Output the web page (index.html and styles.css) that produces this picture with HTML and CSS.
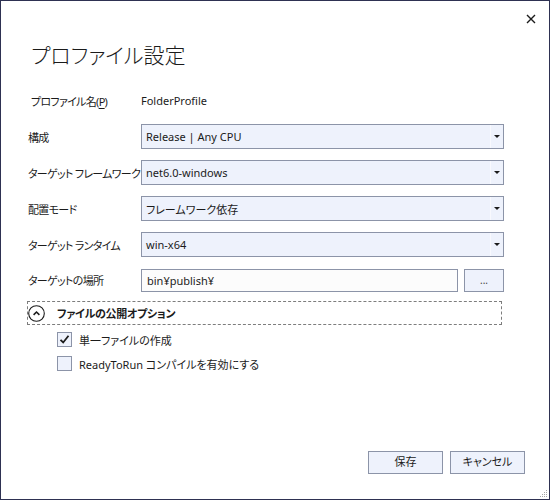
FILE: index.html
```html
<!DOCTYPE html>
<html lang="ja">
<head>
    <meta charset="UTF-8">
    <title>プロファイル設定</title>
    <link rel="stylesheet" href="styles.css">
</head>
<body>
    <div class="dialog">
        <div class="titlebar">
            <span class="close" title="閉じる">
                <svg width="10" height="10" viewBox="0 0 10 10"><path d="M1 1L9 9M9 1L1 9" stroke="#1b1b1b" stroke-width="1.4"/></svg>
            </span>
        </div>
        <h1 class="title">プロファイル設定</h1>

        <div class="form">
            <div class="row name_row">
                <div class="label">プロファイル名(<u>P</u>)</div>
                <div class="value">FolderProfile</div>
            </div>
            <div class="row">
                <div class="label">構成</div>
                <div class="combo"><span>Release | Any CPU</span><i class="arrow"></i></div>
            </div>
            <div class="row">
                <div class="label">ターゲット フレームワーク</div>
                <div class="combo"><span>net6.0-windows</span><i class="arrow"></i></div>
            </div>
            <div class="row">
                <div class="label">配置モード</div>
                <div class="combo"><span>フレームワーク依存</span><i class="arrow"></i></div>
            </div>
            <div class="row">
                <div class="label">ターゲット ランタイム</div>
                <div class="combo"><span>win-x64</span><i class="arrow"></i></div>
            </div>
            <div class="row path_row">
                <div class="label">ターゲットの場所</div>
                <div class="path_group">
                    <div class="textbox">bin¥publish¥</div>
                    <div class="btn browse">...</div>
                </div>
            </div>
        </div>

        <div class="expander">
            <span class="chevron">
                <svg width="17" height="17" viewBox="0 0 17 17"><circle cx="8.5" cy="8.5" r="7.8" fill="none" stroke="#1b1b1b" stroke-width="1.1"/><path d="M5.6 9.8L8.5 7L11.4 9.8" fill="none" stroke="#1b1b1b" stroke-width="1.6"/></svg>
            </span>
            <span class="exp_title">ファイルの公開オプション</span>
        </div>

        <div class="options">
            <label class="check">
                <span class="box">
                    <svg width="11" height="11" viewBox="0 0 11 11"><path d="M1.5 5.8L4.2 8.5L9.5 1.8" fill="none" stroke="#1b1b1b" stroke-width="1.8"/></svg>
                </span>
                単一ファイルの作成
            </label>
            <label class="check">
                <span class="box"></span>
                ReadyToRun コンパイルを有効にする
            </label>
        </div>

        <div class="footer">
            <div class="btn">保存</div>
            <div class="btn">キャンセル</div>
        </div>

        <svg class="grip" width="10" height="10" viewBox="0 0 10 10">
            <rect x="8" y="2" width="1" height="1" fill="#a5a5a5"/>
            <rect x="6" y="4" width="1" height="1" fill="#a5a5a5"/>
            <rect x="8" y="4" width="1" height="1" fill="#a5a5a5"/>
            <rect x="4" y="6" width="1" height="1" fill="#a5a5a5"/>
            <rect x="6" y="6" width="1" height="1" fill="#a5a5a5"/>
            <rect x="8" y="6" width="1" height="1" fill="#a5a5a5"/>
            <rect x="2" y="8" width="1" height="1" fill="#a5a5a5"/>
            <rect x="4" y="8" width="1" height="1" fill="#a5a5a5"/>
            <rect x="6" y="8" width="1" height="1" fill="#a5a5a5"/>
            <rect x="8" y="8" width="1" height="1" fill="#a5a5a5"/>
        </svg>
    </div>
</body>
</html>
```

FILE: styles.css
```css
* {
    margin: 0;
    padding: 0;
    box-sizing: border-box;
}
body {
    background: #fff;
    font-family: "Noto Sans", "Noto Sans CJK JP", sans-serif;
    font-size: 11px;
    color: #1b1b1b;
    font-feature-settings: "palt";
}
.dialog {
    position: relative;
    width: 550px;
    height: 500px;
    border: 1px solid #2e3152;
    background: #fff;
    padding: 0 45px 0 27px;
}
.titlebar {
    height: 38px;
    display: flex;
    justify-content: flex-end;
    align-items: center;
    margin-right: -30px;
}
.close {
    width: 10px;
    height: 10px;
    display: flex;
    margin-right: -2px;
    margin-top: -3px;
}
.title {
    font-family: "Noto Sans CJK JP", sans-serif;
    font-weight: 300;
    font-size: 21px;
    line-height: 30px;
    height: 30px;
    margin-left: 3px;
}

/* form rows */
.form {
    margin-top: 19px;
    display: flex;
    flex-direction: column;
    gap: 11px;
}
.row {
    display: flex;
    align-items: center;
    height: 25px;
}
.label {
    width: 113px;
    flex-shrink: 0;
    white-space: nowrap;
    letter-spacing: -0.7px;
}
.name_row .label {
    padding-left: 3px;
}
.label u {
    text-underline-offset: 2px;
}
.combo {
    flex: 1;
    height: 25px;
    display: flex;
    align-items: center;
    background: #eef2fc;
    border: 1px solid #8c94a8;
    padding-left: 4px;
}
.combo span {
    flex: 1;
}
.arrow {
    width: 13px;
    height: 23px;
    border-left: 1px solid #f8f9fe;
    display: flex;
    align-items: center;
    justify-content: center;
}
.arrow::after {
    content: "";
    border-left: 3px solid transparent;
    border-right: 3px solid transparent;
    border-top: 3px solid #1b1b1b;
}
.path_row {
    margin-top: 1px;
    height: 22px;
}
.path_group {
    flex: 1;
    display: flex;
    gap: 6px;
}
.textbox {
    flex: 1;
    height: 23px;
    line-height: 21px;
    border: 1px solid #8c94a8;
    background: #fcfcfc;
    padding-left: 5px;
}
.btn {
    height: 23px;
    line-height: 20px;
    border: 1px solid #8c94a8;
    background: #eef2fc;
    text-align: center;
}
.browse {
    width: 40px;
    font-size: 10px;
    color: #444;
}

/* publish options */
.expander {
    margin: 10px 2px 0 -1px;
    height: 24px;
    border: 1px dashed #7d7d7d;
    display: flex;
    align-items: center;
}
.chevron {
    display: flex;
}
.exp_title {
    margin-left: 12px;
    font-family: "Noto Sans CJK JP", sans-serif;
    font-weight: 700;
    letter-spacing: -0.3px;
}
.options {
    margin-top: 7px;
    margin-left: 29px;
    display: flex;
    flex-direction: column;
    gap: 9px;
}
.check {
    display: flex;
    align-items: center;
    gap: 7px;
    height: 15px;
}
.box {
    width: 15px;
    height: 15px;
    border: 1px solid #8c94a8;
    background: #eef2fc;
    display: flex;
    align-items: center;
    justify-content: center;
}
.footer {
    position: absolute;
    right: 24px;
    bottom: 25px;
    display: flex;
    gap: 7px;
}
.footer .btn {
    width: 75px;
}
.grip {
    position: absolute;
    right: 1px;
    bottom: 1px;
}
```
